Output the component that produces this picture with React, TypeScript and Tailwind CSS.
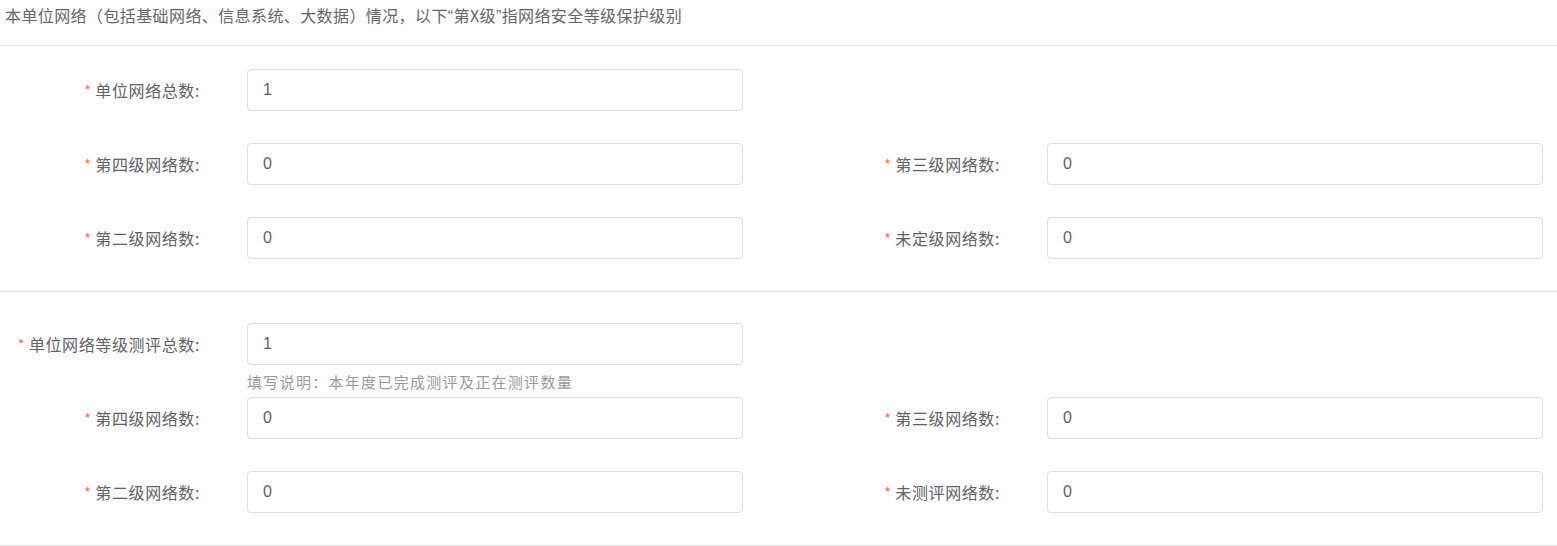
import React from "react";

const FONT = { fontFamily: '"Noto Sans CJK SC", "Noto Sans", sans-serif' };
const LATIN = { fontFamily: '"Liberation Sans", Arial, sans-serif' };

function Item({ label, value }: { label: string; value: string }) {
  return (
    <div className="flex items-center">
      <div className="w-[200px] flex justify-end items-center text-[16px] leading-[22px] text-[#606266] tracking-[0.6px]">
        <span className="text-[#f56c6c] mr-[4px] text-[14px]">*</span>
        <span>{label}:</span>
      </div>
      <div className="ml-[47px] w-[496px] h-[42px] border border-[#dcdfe6] rounded-[4px] bg-white flex items-center pl-[15px] text-[16px] text-[#606266]" style={LATIN}>
        {value}
      </div>
    </div>
  );
}

export default function App() {
  return (
    <div className="w-[1557px] h-[546px] bg-white overflow-hidden" style={FONT}>
      <div className="h-[46px] border-b border-[#e4e4e4] pl-[5px] pt-[4px] text-[16px] leading-[22px] text-[#666666] tracking-[0.4px]">
        本单位网络（包括基础网络、信息系统、大数据）情况，以下<span style={LATIN}>“</span>第X级<span style={LATIN}>”</span>指网络安全等级保护级别
      </div>
      <div className="pt-[23px] pb-[32px] border-b border-[#e4e4e4] flex flex-col gap-[32px]">
        <div className="grid grid-cols-[800px_1fr]">
          <Item label="单位网络总数" value="1" />
          <div />
        </div>
        <div className="grid grid-cols-[800px_1fr]">
          <Item label="第四级网络数" value="0" />
          <Item label="第三级网络数" value="0" />
        </div>
        <div className="grid grid-cols-[800px_1fr]">
          <Item label="第二级网络数" value="0" />
          <Item label="未定级网络数" value="0" />
        </div>
      </div>
      <div className="pt-[31px] pb-[32px] border-b border-[#e4e4e4] flex flex-col">
        <div className="grid grid-cols-[800px_1fr]">
          <div>
            <Item label="单位网络等级测评总数" value="1" />
            <div className="h-[32px] pl-[247px] flex items-center pt-[2px] text-[15px] text-[#999999] tracking-[1.3px]">
              填写说明：本年度已完成测评及正在测评数量
            </div>
          </div>
          <div />
        </div>
        <div className="grid grid-cols-[800px_1fr] mb-[32px]">
          <Item label="第四级网络数" value="0" />
          <Item label="第三级网络数" value="0" />
        </div>
        <div className="grid grid-cols-[800px_1fr]">
          <Item label="第二级网络数" value="0" />
          <Item label="未测评网络数" value="0" />
        </div>
      </div>
    </div>
  );
}
